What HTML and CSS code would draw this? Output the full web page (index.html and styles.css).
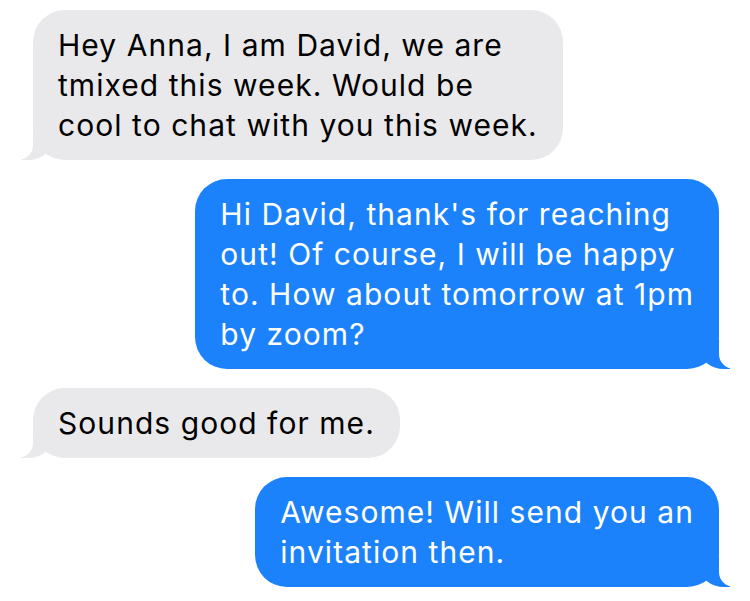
FILE: index.html
```html
<!DOCTYPE html>
<html>
<head>
<meta charset="utf-8">
<link rel="stylesheet" href="styles.css">
</head>
<body>
<div class="chat">
  <div class="bubble them">Hey Anna, I am David, we are<br>tmixed this week. Would be<br>cool to chat with you this week.</div>
  <div class="bubble me">Hi David, thank's for reaching<br>out! Of course, I will be happy<br>to. How about tomorrow at 1pm<br>by zoom?</div>
  <div class="bubble them">Sounds good for me.</div>
  <div class="bubble me">Awesome! Will send you an<br>invitation then.</div>
</div>
</body>
</html>
```
FILE: styles.css
```css
html, body {
  margin: 0;
  padding: 0;
  background: #ffffff;
}
.chat {
  display: flex;
  flex-direction: column;
  gap: 19px;
  padding: 10px 31px 0 33px;
  font-family: Inter, "Liberation Sans", Arial, sans-serif;
  font-size: 30px;
  line-height: 40px;
  letter-spacing: 1.05px;
}
.bubble {
  position: relative;
  padding: 15px 25px;
  border-radius: 32px;
  white-space: nowrap;
}
.them {
  align-self: flex-start;
  background: #e9e9eb;
  color: #000;
}
.me {
  align-self: flex-end;
  background: #1b82fb;
  color: #fff;
}
.bubble::before,
.bubble::after {
  content: "";
  position: absolute;
  bottom: 0;
  height: 30px;
}
.them::before {
  left: -11px;
  width: 30px;
  background: #e9e9eb;
  border-bottom-right-radius: 24px 20px;
}
.them::after {
  left: -40px;
  width: 40px;
  background: #fff;
  border-bottom-right-radius: 15px;
}
.me::before {
  right: -11px;
  width: 30px;
  background: #1b82fb;
  border-bottom-left-radius: 24px 20px;
}
.me::after {
  right: -40px;
  width: 40px;
  background: #fff;
  border-bottom-left-radius: 15px;
}
```
